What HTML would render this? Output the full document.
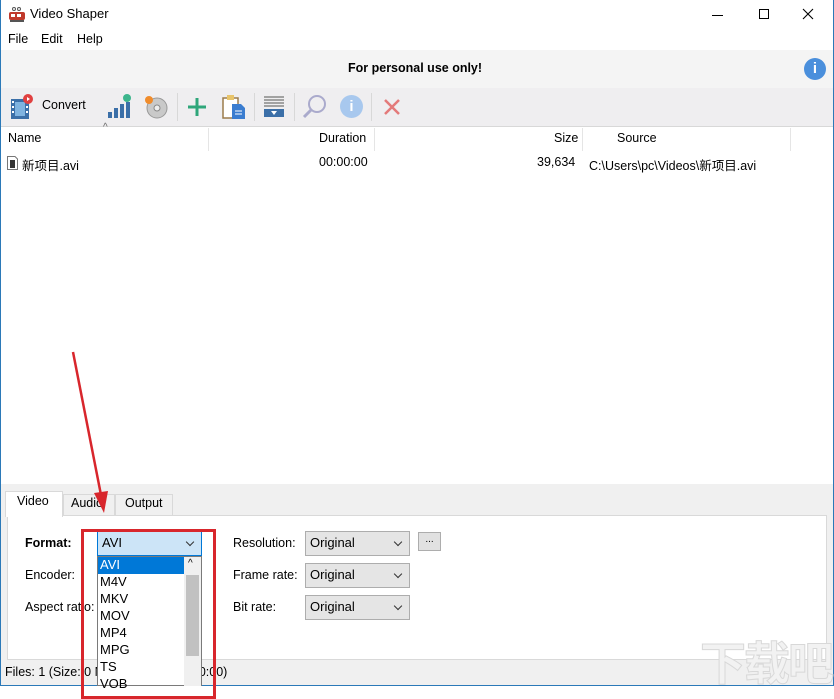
<!DOCTYPE html>
<html><head><meta charset="utf-8"><style>
*{box-sizing:border-box;margin:0;padding:0}
body{width:834px;height:686px;overflow:hidden;background:#fff;font-family:"Segoe UI","Liberation Sans","Noto Sans CJK SC",sans-serif;font-size:12.5px;color:#000;position:relative}
.a{position:absolute}
.t{position:absolute;white-space:nowrap}
.cb{position:absolute;background:#e5e5e5;border:1px solid #adadad;height:25px;padding:3px 0 0 4px;font-size:13px}
.cb:after{content:"";position:absolute;right:8px;top:7px;width:5px;height:5px;border-right:1px solid #333;border-bottom:1px solid #333;transform:rotate(45deg)}
.it{position:absolute;left:100px;font-size:13px}
</style></head><body>
<div class="a" style="left:0;top:0;width:834px;height:686px;border:1px solid #2b79b8;border-top:none"></div>
<svg class="a" style="left:8px;top:7px" width="18" height="16"><rect x="1" y="5" width="16" height="8" rx="2" fill="#c0392b"/><rect x="3" y="7" width="4" height="3" fill="#fff"/><rect x="9" y="7" width="4" height="3" fill="#fff"/><circle cx="6" cy="2" r="1.5" fill="none" stroke="#555"/><circle cx="11" cy="2" r="1.5" fill="none" stroke="#555"/><rect x="2" y="13" width="14" height="2" fill="#555"/></svg>
<div class="t" style="left:30px;top:6px;font-size:13px">Video Shaper</div>
<div class="a" style="left:712px;top:15px;width:11px;height:1px;background:#000"></div>
<div class="a" style="left:759px;top:9px;width:10px;height:10px;border:1px solid #000"></div>
<svg class="a" style="left:802px;top:8px" width="12" height="12"><path d="M1 1L11 11M11 1L1 11" stroke="#000" stroke-width="1.1"/></svg>
<div class="t" style="left:8px;top:32px">File</div>
<div class="t" style="left:41px;top:32px">Edit</div>
<div class="t" style="left:77px;top:32px">Help</div>
<div class="a" style="left:1px;top:50px;width:832px;height:38px;background:#f4f4f4"></div>
<div class="t" style="left:348px;top:61px;font-weight:bold">For personal use only!</div>
<div class="a" style="left:804px;top:58px;width:22px;height:22px;border-radius:50%;background:#4a8fdc;color:#fff;font-weight:bold;text-align:center;line-height:22px;font-size:15px">i</div>
<div class="a" style="left:1px;top:88px;width:832px;height:39px;background:#efeef0;border-bottom:1px solid #d8d8d8"></div>
<svg class="a" style="left:10px;top:93px" width="24" height="28"><rect x="1" y="6" width="18" height="20" fill="#3b6fa8"/><rect x="5" y="9" width="10" height="14" fill="#7fb3e0"/><g fill="#fff"><rect x="2" y="8" width="2" height="2"/><rect x="2" y="13" width="2" height="2"/><rect x="2" y="18" width="2" height="2"/><rect x="16" y="8" width="2" height="2"/><rect x="16" y="13" width="2" height="2"/><rect x="16" y="18" width="2" height="2"/></g><circle cx="18" cy="6" r="5" fill="#e04040"/><path d="M17 4L20 6L17 8Z" fill="#fff"/></svg>
<div class="t" style="left:42px;top:98px">Convert</div>
<svg class="a" style="left:107px;top:94px" width="26" height="26"><g fill="#3b6fa8"><rect x="1" y="18" width="4" height="6"/><rect x="7" y="14" width="4" height="10"/><rect x="13" y="10" width="4" height="14"/><rect x="19" y="8" width="4" height="16"/></g><circle cx="20" cy="4" r="4" fill="#3cb58c"/></svg>
<svg class="a" style="left:143px;top:94px" width="26" height="26"><circle cx="14" cy="14" r="10" fill="#c9c9c9" stroke="#999"/><circle cx="14" cy="14" r="3" fill="#eee" stroke="#888"/><circle cx="6" cy="6" r="4" fill="#f08c2c"/></svg>
<div class="a" style="left:177px;top:93px;width:1px;height:28px;background:#d8d8d8"></div>
<svg class="a" style="left:186px;top:96px" width="22" height="22"><path d="M11 2V20M2 11H20" stroke="#2fa67a" stroke-width="3"/></svg>
<svg class="a" style="left:222px;top:94px" width="24" height="26"><rect x="1" y="4" width="15" height="20" fill="#fff" stroke="#9c7b4a" stroke-width="1.5"/><rect x="5" y="1" width="7" height="5" fill="#e8c46a"/><path d="M10 10H19L23 14V25H10Z" fill="#3b7dd0"/><path d="M13 17H20M13 20H20" stroke="#fff"/></svg>
<div class="a" style="left:254px;top:93px;width:1px;height:28px;background:#d8d8d8"></div>
<svg class="a" style="left:263px;top:96px" width="22" height="22"><g stroke="#555"><path d="M1 1H21M1 4H21M1 7H21M1 10H21"/></g><rect x="1" y="13" width="20" height="8" fill="#3b6fa8"/><path d="M8 15H14L11 19Z" fill="#fff"/></svg>
<div class="a" style="left:294px;top:93px;width:1px;height:28px;background:#d8d8d8"></div>
<svg class="a" style="left:302px;top:94px" width="26" height="26"><circle cx="15" cy="10" r="8" fill="none" stroke="#aac" stroke-width="2"/><path d="M9 16L2 23" stroke="#aac" stroke-width="3"/></svg>
<div class="a" style="left:340px;top:95px;width:23px;height:23px;border-radius:50%;background:#a8c8ee;color:#fff;font-weight:bold;text-align:center;line-height:23px;font-size:15px">i</div>
<div class="a" style="left:371px;top:93px;width:1px;height:28px;background:#d8d8d8"></div>
<svg class="a" style="left:383px;top:98px" width="18" height="18"><path d="M2 2L16 16M16 2L2 16" stroke="#e37a7a" stroke-width="2.5"/></svg>
<div class="t" style="left:103px;top:122px;font-size:10px;color:#666">^</div>
<div class="t" style="left:8px;top:131px">Name</div>
<div class="a" style="left:208px;top:128px;width:1px;height:23px;background:#e5e5e5"></div>
<div class="t" style="left:319px;top:131px">Duration</div>
<div class="a" style="left:374px;top:128px;width:1px;height:23px;background:#e5e5e5"></div>
<div class="t" style="left:554px;top:131px">Size</div>
<div class="a" style="left:582px;top:128px;width:1px;height:23px;background:#e5e5e5"></div>
<div class="t" style="left:617px;top:131px">Source</div>
<div class="a" style="left:790px;top:128px;width:1px;height:23px;background:#e5e5e5"></div>
<svg class="a" style="left:7px;top:156px" width="11" height="14"><path d="M0.5 0.5H8L10.5 3V13.5H0.5Z" fill="#fff" stroke="#777"/><rect x="3" y="4" width="5" height="8" fill="#333"/></svg>
<div class="t" style="left:22px;top:155px">新项目.avi</div>
<div class="t" style="left:319px;top:155px">00:00:00</div>
<div class="t" style="left:537px;top:155px">39,634</div>
<div class="t" style="left:589px;top:155px">C:\Users\pc\Videos\新项目.avi</div>
<div class="a" style="left:1px;top:484px;width:832px;height:201px;background:#f0f0f0"></div>
<div class="a" style="left:7px;top:515px;width:820px;height:145px;background:#fff;border:1px solid #d9d9d9"></div>
<div class="a" style="left:5px;top:491px;width:58px;height:26px;background:#fff;border:1px solid #d9d9d9;border-bottom:none"></div>
<div class="t" style="left:17px;top:494px">Video</div>
<div class="a" style="left:63px;top:494px;width:52px;height:22px;border:1px solid #d9d9d9;border-bottom:none"></div>
<div class="t" style="left:71px;top:496px">Audio</div>
<div class="a" style="left:115px;top:494px;width:58px;height:22px;border:1px solid #d9d9d9;border-bottom:none"></div>
<div class="t" style="left:125px;top:496px">Output</div>
<div class="t" style="left:25px;top:536px;font-weight:bold">Format:</div>
<div class="t" style="left:25px;top:568px">Encoder:</div>
<div class="t" style="left:25px;top:600px">Aspect ratio:</div>
<div class="t" style="left:233px;top:536px">Resolution:</div>
<div class="t" style="left:233px;top:568px">Frame rate:</div>
<div class="t" style="left:233px;top:600px">Bit rate:</div>
<div class="cb" style="left:305px;top:531px;width:105px">Original</div>
<div class="cb" style="left:305px;top:563px;width:105px">Original</div>
<div class="cb" style="left:305px;top:595px;width:105px">Original</div>
<div class="a" style="left:418px;top:532px;width:23px;height:19px;background:#e1e1e1;border:1px solid #adadad;font-size:10px;text-align:center;line-height:14px">...</div>
<div class="t" style="left:5px;top:665px">Files: 1 (Size: 0 MB, Duration: 00:00:00)</div>
<div class="cb" style="left:97px;top:531px;width:105px;background:#cce4f7;border-color:#0078d7">AVI</div>
<div class="a" style="left:97px;top:556px;width:105px;height:130px;background:#fff;border:1px solid #7a7a7a"></div>
<div class="a" style="left:98px;top:557px;width:86px;height:17px;background:#0078d7"></div>
<div class="a" style="left:184px;top:557px;width:17px;height:129px;background:#f0f0f0"></div>
<div class="a" style="left:186px;top:575px;width:13px;height:81px;background:#c1c1c1"></div>
<div class="t" style="left:188px;top:558px;font-size:10px">^</div>
<div class="it" style="top:557px;color:#fff">AVI</div>
<div class="it" style="top:574px">M4V</div>
<div class="it" style="top:591px">MKV</div>
<div class="it" style="top:608px">MOV</div>
<div class="it" style="top:625px">MP4</div>
<div class="it" style="top:642px">MPG</div>
<div class="it" style="top:659px">TS</div>
<div class="it" style="top:676px">VOB</div>
<div class="a" style="left:81px;top:529px;width:135px;height:170px;border:3px solid #d8262c"></div>
<svg class="a" style="left:60px;top:345px" width="60" height="175"><path d="M13 7L41 150" stroke="#d8262c" stroke-width="2.5"/><path d="M34 148L44 168L48 146Z" fill="#d8262c"/></svg>
<div class="t" style="left:700px;top:628px;font-size:46px;color:#f2f2f2;-webkit-text-stroke:1px #d8d8d8;font-weight:bold;letter-spacing:-2px;font-family:'Noto Sans CJK SC',sans-serif">下载吧</div>
</body></html>
